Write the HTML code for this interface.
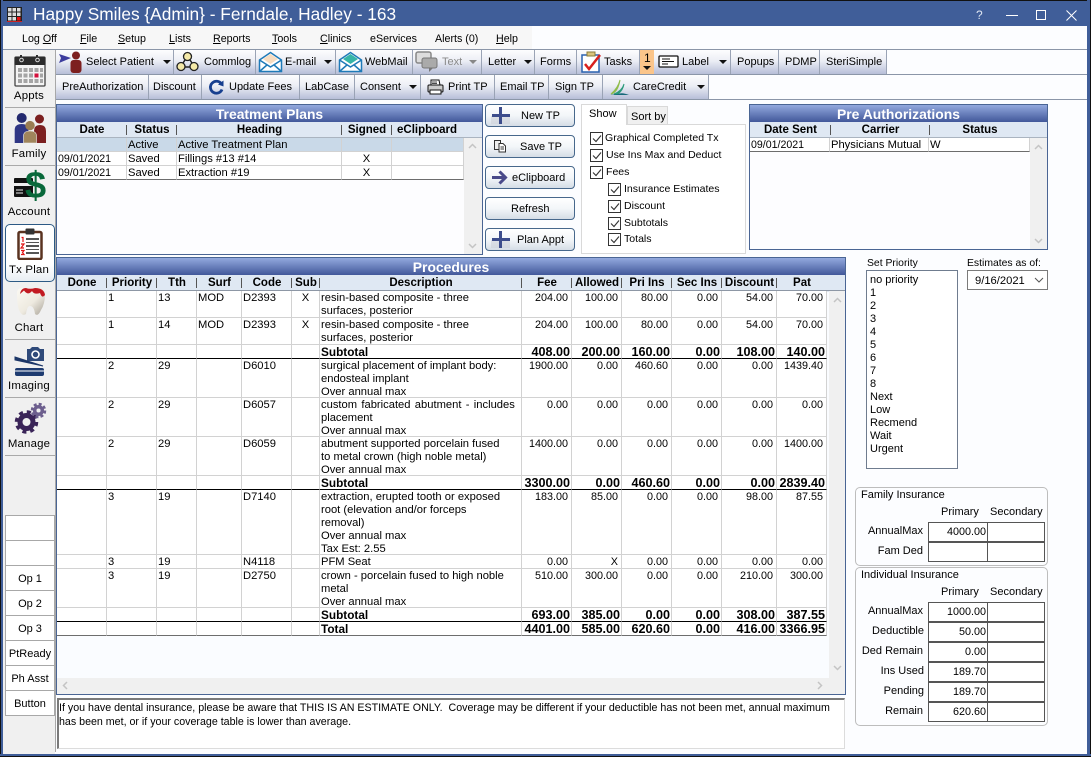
<!DOCTYPE html>
<html><head><meta charset="utf-8"><title>Happy Smiles</title>
<style>
html,body{margin:0;padding:0;width:1091px;height:757px;overflow:hidden;background:#000}
*{box-sizing:border-box}
#w{position:absolute;left:0;top:0;width:1091px;height:757px;background:#fcfdff;font:11px/13px "Liberation Sans",Arial,sans-serif;color:#000;overflow:hidden}
.a{position:absolute}
.t{position:absolute;white-space:nowrap}
.b{font-weight:bold}
.tb{position:absolute;background:linear-gradient(#fdfdfe 0%,#eceef5 45%,#b7bed8 100%);border-right:1px solid #9aa3b5}
.ar{position:absolute;width:0;height:0;border-left:4px solid transparent;border-right:4px solid transparent;border-top:4px solid #111}
.m .t{font-size:10.7px}
.m u{text-decoration:underline}
.nav{position:absolute;left:3px;width:52px;text-align:center;font-size:11.4px;letter-spacing:.2px}
.sep{position:absolute;left:5px;width:50px;height:1px;background:#a9a9a9}
.op{position:absolute;left:5px;width:50px;height:26px;background:#fff;border:1px solid #a8a8a8;text-align:center;line-height:26px}
.tit{position:absolute;height:17px;background:linear-gradient(#93a9de,#42589a);color:#fff;font-weight:bold;font-size:13.9px;line-height:18px;text-align:center;white-space:nowrap}
table{border-collapse:separate;border-spacing:0;table-layout:fixed;position:absolute}
.h td{background:#dfe8f3 linear-gradient(#555,#555) right 3px/1px 10px no-repeat;font-weight:bold;font-size:11.5px;text-align:center;height:15px;line-height:17px;padding:0;white-space:nowrap}
.h td:last-child{background-image:none}
.g td{border-right:1px solid #d2d2d2;border-bottom:1px solid #d2d2d2;vertical-align:top;padding:1px 1px 0;line-height:13px;overflow:hidden;white-space:nowrap;background:#fff;font-size:11.2px}
.g td::after{content:"";display:block;height:0;margin-top:-1px}
.g td.r{text-align:right;padding-right:3px;font-size:10.8px}
.g td.c{text-align:center}
.g tr.s td{font-weight:bold;font-size:11.8px}
.g tr.s td.r{padding-right:1px;font-size:12.6px}
.g tr.k td{border-bottom:1px solid #000}
.g tr.l td{border-bottom:1px solid #6d6d6d}
.o{margin-bottom:-1px;height:100%}
.dt{font-size:10.6px}
.btn{position:absolute;left:485px;width:90px;height:23px;border:1px solid #47688c;border-radius:4px;background:linear-gradient(#fff,#f3f6f9 50%,#d5dde6);line-height:22px}
.chk{position:absolute;width:13px;height:13px;border:1px solid #333;background:#fff}
.ck{font-size:10.55px}
.sb{position:absolute;background:#f0f0f0}
.fld{position:absolute;height:20px;border:1px solid #555;background:#fff;text-align:right;line-height:18px;padding-right:1px;font-size:10.8px}
.ib{position:absolute;left:855px;width:193px;border:1px solid #bdbdbd;border-radius:5px;background:#fcfdff}
.lb{position:absolute;text-align:right;white-space:nowrap}
</style></head><body>
<div id="w">
<!-- window frame -->
<div class="a" style="left:0;top:0;width:1091px;height:26px;background:#405e99;border-top:1px solid #111"></div>
<div class="a" style="left:0;top:0;width:3px;height:757px;background:#405e99;border-left:1px solid #111"></div>
<div class="a" style="left:1087px;top:0;width:4px;height:757px;background:#405e99;border-right:1px solid #111"></div>
<div class="a" style="left:0;top:754px;width:1091px;height:3px;background:#405e99;border-bottom:1px solid #111"></div>
<svg class="a" style="left:7px;top:7px" width="15" height="15"><rect width="15" height="15" fill="#222"/><g fill="#ddd"><rect x="1" y="1" width="3.5" height="3.5"/><rect x="5.5" y="1" width="3.5" height="3.5"/><rect x="10" y="1" width="3.5" height="3.5"/><rect x="1" y="5.5" width="3.5" height="3.5"/><rect x="5.5" y="5.5" width="3.5" height="3.5"/><rect x="10" y="5.5" width="3.5" height="3.5"/><rect x="1" y="10" width="3.5" height="3.5"/><rect x="5.5" y="10" width="3.5" height="3.5"/></g><rect x="10" y="10" width="3.5" height="3.5" fill="#e11"/><path d="M0 14.5H15" stroke="#c22" stroke-width="1"/></svg>
<div class="t" style="left:33px;top:4px;font-size:17.3px;line-height:20px;color:#fff">Happy Smiles {Admin} - Ferndale, Hadley - 163</div>
<div class="t" style="left:976px;top:9px;color:#dfe6f2;font-size:12px">?</div>
<div class="a" style="left:1006px;top:15px;width:12px;height:1px;background:#fff"></div>
<div class="a" style="left:1036px;top:10px;width:10px;height:10px;border:1px solid #fff"></div>
<svg class="a" style="left:1066px;top:10px" width="11" height="11"><path d="M.5.5l10 10M10.500.5l-10 10" stroke="#fff" fill="none"/></svg>
<!-- menu -->
<div class="a" style="left:3px;top:26px;width:529px;height:23px;background:#f7f7f7"></div>
<div class="m">
<div class="t" style="left:22px;top:33px">Log <u>O</u>ff</div>
<div class="t" style="left:80px;top:33px"><u>F</u>ile</div>
<div class="t" style="left:118px;top:33px"><u>S</u>etup</div>
<div class="t" style="left:169px;top:33px"><u>L</u>ists</div>
<div class="t" style="left:213px;top:33px"><u>R</u>eports</div>
<div class="t" style="left:272px;top:33px"><u>T</u>ools</div>
<div class="t" style="left:320px;top:33px"><u>C</u>linics</div>
<div class="t" style="left:370px;top:33px">eServices</div>
<div class="t" style="left:435px;top:33px">Alerts (0)</div>
<div class="t" style="left:496px;top:33px"><u>H</u>elp</div>
</div>
<!-- toolbars -->
<div class="a" style="left:3px;top:49px;width:1084px;height:1px;background:#8b96a8"></div>
<div class="a" style="left:56px;top:74px;width:1031px;height:1px;background:#8b96a8"></div>
<div class="a" style="left:56px;top:99px;width:1031px;height:1px;background:#8b96a8"></div>
<!-- row 1 -->
<div class="tb" style="left:56px;top:50px;width:118px;height:24px"></div>
<div class="tb" style="left:174px;top:50px;width:82px;height:24px"></div>
<div class="tb" style="left:256px;top:50px;width:80px;height:24px"></div>
<div class="tb" style="left:336px;top:50px;width:77px;height:24px"></div>
<div class="tb" style="left:413px;top:50px;width:69px;height:24px"></div>
<div class="tb" style="left:482px;top:50px;width:53px;height:24px"></div>
<div class="tb" style="left:535px;top:50px;width:42px;height:24px"></div>
<div class="tb" style="left:577px;top:50px;width:63px;height:24px"></div>
<div class="a" style="left:640px;top:50px;width:14px;height:24px;background:#fbc58a"></div>
<div class="tb" style="left:654px;top:50px;width:77px;height:24px"></div>
<div class="tb" style="left:731px;top:50px;width:48px;height:24px"></div>
<div class="tb" style="left:779px;top:50px;width:41px;height:24px"></div>
<div class="tb" style="left:820px;top:50px;width:67px;height:24px"></div>
<div class="t" style="left:86px;top:56px">Select Patient</div><div class="ar" style="left:163px;top:60px"></div>
<div class="t" style="left:204px;top:56px">Commlog</div>
<div class="t" style="left:285px;top:56px">E-mail</div><div class="ar" style="left:324px;top:60px"></div>
<div class="t" style="left:365px;top:56px">WebMail</div>
<div class="t" style="left:442px;top:56px;color:#8a8a8a">Text</div><div class="ar" style="left:469px;top:60px;border-top-color:#888"></div>
<div class="t" style="left:488px;top:56px">Letter</div><div class="ar" style="left:524px;top:60px"></div>
<div class="t" style="left:540px;top:56px">Forms</div>
<div class="t" style="left:604px;top:56px">Tasks</div>
<div class="t" style="left:644px;top:52px;font-size:12px">1</div><div class="ar" style="left:643px;top:66px"></div>
<div class="t" style="left:682px;top:56px">Label</div><div class="ar" style="left:719px;top:60px"></div>
<div class="t" style="left:737px;top:56px">Popups</div>
<div class="t" style="left:785px;top:56px">PDMP</div>
<div class="t" style="left:826px;top:56px">SteriSimple</div>
<!-- row 2 -->
<div class="tb" style="left:56px;top:75px;width:93px;height:24px"></div>
<div class="tb" style="left:149px;top:75px;width:53px;height:24px"></div>
<div class="tb" style="left:202px;top:75px;width:98px;height:24px"></div>
<div class="tb" style="left:300px;top:75px;width:55px;height:24px"></div>
<div class="tb" style="left:355px;top:75px;width:66px;height:24px"></div>
<div class="tb" style="left:421px;top:75px;width:74px;height:24px"></div>
<div class="tb" style="left:495px;top:75px;width:54px;height:24px"></div>
<div class="tb" style="left:549px;top:75px;width:54px;height:24px"></div>
<div class="tb" style="left:603px;top:75px;width:106px;height:24px;border-right:1px solid #9aa3b5"></div>
<div class="t" style="left:62px;top:81px">PreAuthorization</div>
<div class="t" style="left:153px;top:81px">Discount</div>
<div class="t" style="left:229px;top:81px">Update Fees</div>
<div class="t" style="left:305px;top:81px">LabCase</div>
<div class="t" style="left:360px;top:81px">Consent</div><div class="ar" style="left:409px;top:85px"></div>
<div class="t" style="left:448px;top:81px">Print TP</div>
<div class="t" style="left:500px;top:81px">Email TP</div>
<div class="t" style="left:555px;top:81px">Sign TP</div>
<div class="t" style="left:633px;top:81px">CareCredit</div><div class="ar" style="left:697px;top:85px"></div>
<!-- toolbar icons -->
<svg class="a" style="left:58px;top:51px" width="26" height="22"><path d="M1 3l12 4-12 5 2-5z" fill="#3d3d9e"/><circle cx="18" cy="4.500" r="4" fill="#7d1f1f"/><rect x="12.500" y="9" width="11" height="13" rx="3" fill="#7d1f1f"/></svg>
<svg class="a" style="left:176px;top:51px" width="23" height="21"><path d="M11.500 5L4.500 16H18.500z" fill="none" stroke="#222" stroke-width="1.500"/><circle cx="11.500" cy="5.500" r="4" fill="#f4e9a8" stroke="#222" stroke-width="1.300"/><circle cx="5" cy="15.500" r="4" fill="#f4e9a8" stroke="#222" stroke-width="1.300"/><circle cx="18" cy="15.500" r="4" fill="#f4e9a8" stroke="#222" stroke-width="1.300"/></svg>
<svg class="a" style="left:258px;top:51px" width="25" height="22"><path d="M1.500 9L12.500 1.500 23.500 9V20.500H1.500z" fill="#fff" stroke="#1f7ab8" stroke-width="1.500"/><path d="M5 8l7.500-5 7.500 5-7.500 5z" fill="#f7dcc0"/><path d="M1.500 9l11 7 11-7M1.500 20.500l8-7M23.500 20.500l-8-7" fill="none" stroke="#1f7ab8" stroke-width="1.500"/></svg>
<svg class="a" style="left:338px;top:51px" width="25" height="22"><path d="M1.500 9L12.500 1.500 23.500 9V20.500H1.500z" fill="#fff" stroke="#1f7ab8" stroke-width="1.500"/><path d="M5 8l7.500-5 7.500 5-7.500 5z" fill="#36b5a8"/><path d="M1.500 9l11 7 11-7M1.500 20.500l8-7M23.500 20.500l-8-7" fill="none" stroke="#1f7ab8" stroke-width="1.500"/></svg>
<svg class="a" style="left:415px;top:51px" width="24" height="22"><rect x="1" y="1" width="15" height="11" rx="2" fill="#ddd" stroke="#888" stroke-width="1.500"/><rect x="7" y="7" width="15" height="10" rx="2" fill="#aaa" stroke="#777"/><path d="M14 17v4l4-4z" fill="#777"/></svg>
<svg class="a" style="left:581px;top:51px" width="22" height="22"><rect x="1" y="4" width="17" height="17" fill="#fff" stroke="#2b62b0" stroke-width="1.500"/><rect x="6" y="1" width="8" height="4" fill="#d9c47c" stroke="#8a7a3a"/><path d="M4 13l4 5L19 4" fill="none" stroke="#d8201e" stroke-width="2.500"/></svg>
<svg class="a" style="left:658px;top:55px" width="21" height="13"><rect x="1" y="1" width="19" height="11" rx="1" fill="#fff" stroke="#111" stroke-width="1.300"/><path d="M4 4h8M4 6.500h12M4 9h6" stroke="#111"/></svg>
<svg class="a" style="left:208px;top:79px" width="17" height="17"><path d="M13.500 5A6 6 0 1 0 14 10.500" fill="none" stroke="#173f8f" stroke-width="2.800"/><path d="M10 5.500L15.500 1.500 15.500 7.500z" fill="#173f8f"/></svg>
<svg class="a" style="left:427px;top:79px" width="17" height="16"><path d="M4 1h8l1 5H4z" fill="#fff" stroke="#111"/><rect x="1" y="6" width="15" height="7" rx="1" fill="#ccc" stroke="#111"/><rect x="3" y="11" width="11" height="4" fill="#fff" stroke="#111"/><path d="M5 3h5M5 4.500h5" stroke="#111" stroke-width=".7"/></svg>
<svg class="a" style="left:609px;top:79px" width="21" height="17"><path d="M2 15Q9 13 11 1 9 9 2 15z" fill="#8fbc4a" stroke="#8fbc4a"/><path d="M5 15Q13 12 15 5 14 11 9 15z" fill="#2a9a7a" stroke="#2a9a7a"/><path d="M1 16H20Q13 13 9 15z" fill="#17697a"/></svg>
<!-- left nav -->
<div class="a" style="left:3px;top:50px;width:52px;height:704px;background:#f0f0f0"></div>
<div class="a" style="left:55px;top:50px;width:1px;height:702px;background:#a8a8a8"></div>
<div class="sep" style="top:107px"></div><div class="sep" style="top:165px"></div>
<div class="sep" style="top:339px"></div><div class="sep" style="top:397px"></div><div class="sep" style="top:455px"></div>
<svg class="a" style="left:14px;top:54px" width="32" height="33"><rect x="1" y="3" width="30" height="29" rx="1" fill="#f4f4f4" stroke="#444" stroke-width="1.300"/><rect x="0.500" y="3" width="31" height="8" rx="1" fill="#2b2b2b"/><path d="M7 1v6M23 1v6" stroke="#2b2b2b" stroke-width="2"/><circle cx="7.500" cy="6" r="1.800" fill="none" stroke="#ddd"/><circle cx="23.500" cy="6" r="1.800" fill="none" stroke="#ddd"/><g fill="#a5a5a5"><rect x="4" y="14" width="4" height="4"/><rect x="9.500" y="14" width="4" height="4"/><rect x="15" y="14" width="4" height="4"/><rect x="20.500" y="14" width="4" height="4"/><rect x="26" y="14" width="3" height="4"/><rect x="4" y="19.500" width="4" height="4"/><rect x="9.500" y="19.500" width="4" height="4"/><rect x="15" y="19.500" width="4" height="4"/><rect x="26" y="19.500" width="3" height="4"/><rect x="4" y="25" width="4" height="4"/><rect x="9.500" y="25" width="4" height="4"/><rect x="15" y="25" width="4" height="4"/><rect x="20.500" y="25" width="4" height="4"/><rect x="26" y="25" width="3" height="4"/></g><rect x="20.500" y="19.500" width="4" height="4" fill="#d4103c"/></svg>
<div class="nav" style="top:90px">Appts</div>
<svg class="a" style="left:14px;top:112px" width="33" height="33"><circle cx="7.700" cy="6" r="5" fill="#23296e"/><path d="M.7 31V18Q.7 12 7.700 12 14.500 12 14.500 18V31z" fill="#2f3684"/><circle cx="25.500" cy="7" r="4.500" fill="#7c2020"/><path d="M20 31V19Q20 13 26 13 32 13 32 19V31z" fill="#7c2020"/><circle cx="16" cy="13.600" r="4.700" fill="#9a7d52"/><path d="M9.500 31V24Q9.500 19 16 19 22.500 19 22.500 24V31z" fill="#a0855c" stroke="#f0f0f0" stroke-width=".6"/></svg>
<div class="nav" style="top:148px">Family</div>
<svg class="a" style="left:13px;top:170px" width="34" height="33"><rect x="1" y="8" width="19" height="19" rx="1" fill="#111"/><rect x="1" y="13" width="19" height="3" fill="#eee"/><path d="M3 20h7M3 23h7" stroke="#eee"/></svg>
<div class="t b" style="left:25px;top:165px;font-size:38px;line-height:42px;color:#08683a">$</div>
<div class="nav" style="top:206px">Account</div>
<!-- Tx plan selected -->
<div class="a" style="left:5px;top:224px;width:50px;height:58px;background:linear-gradient(#fff 70%,#e8eef3);border:1px solid #2d5a85;border-radius:5px"></div>
<svg class="a" style="left:17px;top:228px" width="26" height="32"><rect x="1.500" y="4" width="23" height="27" rx="1.500" fill="#fff" stroke="#5a3320" stroke-width="2.500"/><rect x="8.500" y="0.500" width="9" height="6" rx="1" fill="#333"/><g fill="#555"><rect x="9" y="10" width="13" height="2"/><rect x="9" y="14" width="13" height="1"/><rect x="9" y="17" width="13" height="2"/><rect x="9" y="21" width="13" height="1"/><rect x="9" y="24" width="13" height="2"/></g><path d="M4.500 9.500h1.500v4.500M4 16h3l-3 4h3M4 22.500h3l-1.500 2 1.500 2h-3" stroke="#e01515" stroke-width="1.200" fill="none"/></svg>
<div class="nav" style="top:264px">Tx Plan</div>
<svg class="a" style="left:15px;top:286px" width="31" height="31"><defs><linearGradient id="gt" x1="0" y1="0" x2="1" y2="1"><stop offset="0" stop-color="#fbf9f3"/><stop offset=".55" stop-color="#eeeae0"/><stop offset="1" stop-color="#a9a398"/></linearGradient></defs><path d="M2 9Q1 1 10 2 15 4 20 2 30 1 30 8 30 18 26 24 23 31 20 28 19 20 15 20 12 20 11 28 7 31 4 24 2 18 2 9z" fill="url(#gt)"/><path d="M5 8Q6 2 11 2 15 3.500 20 2 29 2 30 9 27 13 25 7 19 9 17 5 13 10 9 4.500 7 8z" fill="#c21a22"/></svg>
<div class="nav" style="top:322px">Chart</div>
<svg class="a" style="left:14px;top:344px" width="32" height="33"><path d="M13 5h3l2-2h6l2 2h4v12H13z" fill="#2f4a7a"/><circle cx="21.500" cy="10.500" r="3.500" fill="none" stroke="#fff" stroke-width="1.600"/><path d="M1 13L29 22 1 16z" fill="#1d3768" stroke="#1d3768"/><rect x="1" y="24" width="29" height="8" rx="2" fill="#1e3b70"/><rect x="1" y="26.500" width="29" height="1" fill="#fff"/></svg>
<div class="nav" style="top:380px">Imaging</div>
<svg class="a" style="left:14px;top:402px" width="33" height="32"><circle cx="12.500" cy="20" r="6.500" fill="none" stroke="#3a2458" stroke-width="5"/><circle cx="12.500" cy="20" r="10" fill="none" stroke="#3a2458" stroke-width="3.500" stroke-dasharray="4 3.850"/><circle cx="24.500" cy="8.500" r="3.800" fill="none" stroke="#6d5f8e" stroke-width="3.500"/><circle cx="24.500" cy="8.500" r="6.500" fill="none" stroke="#6d5f8e" stroke-width="2.500" stroke-dasharray="3 2.100"/></svg>
<div class="nav" style="top:438px">Manage</div>
<div class="op" style="top:515px"></div><div class="op" style="top:540px"></div>
<div class="op" style="top:565px">Op 1</div><div class="op" style="top:590px">Op 2</div><div class="op" style="top:615px">Op 3</div>
<div class="op" style="top:640px">PtReady</div><div class="op" style="top:665px">Ph Asst</div><div class="op" style="top:690px">Button</div>
<!-- Treatment Plans -->
<div class="a" style="left:56px;top:104px;width:427px;height:151px;border:1px solid #4a6594;background:#fdfdff"></div>
<div class="tit" style="left:57px;top:105px;width:425px">Treatment Plans</div>
<table class="h" style="left:57px;top:122px;width:425px"><colgroup><col style="width:70px"><col style="width:50px"><col style="width:165px"><col style="width:50px"><col style="width:90px"></colgroup><tr><td>Date</td><td>Status</td><td>Heading</td><td>Signed</td><td style="text-align:left;padding-left:5px">eClipboard</td></tr></table>
<div class="a" style="left:57px;top:137px;width:425px;height:1px;background:#aab4c0"></div>
<table class="g" style="left:57px;top:138px;width:407px"><colgroup><col style="width:70px"><col style="width:50px"><col style="width:165px"><col style="width:50px"><col style="width:72px"></colgroup>
<tr style="height:14px"><td style="background:#c9d9e8"></td><td style="background:#c9d9e8">Active</td><td style="background:#c9d9e8">Active Treatment Plan</td><td style="background:#c9d9e8"></td><td style="background:#c9d9e8"></td></tr>
<tr style="height:14px"><td><span class="dt">09/01/2021</span></td><td>Saved</td><td>Fillings #13 #14</td><td class="c">X</td><td></td></tr>
<tr class="l" style="height:14px"><td><span class="dt">09/01/2021</span></td><td>Saved</td><td>Extraction #19</td><td class="c">X</td><td></td></tr></table>
<div class="sb" style="left:464px;top:138px;width:18px;height:116px"></div>
<svg class="a" style="left:468px;top:143px" width="9" height="6"><path d="M1 5l3.500-3.500L8 5" fill="none" stroke="#c4c4c4" stroke-width="1.500"/></svg>
<svg class="a" style="left:468px;top:243px" width="9" height="6"><path d="M1 1l3.500 3.500L8 1" fill="none" stroke="#c4c4c4" stroke-width="1.500"/></svg>
<!-- buttons -->
<div class="btn" style="top:104px"><span class="t" style="left:35px;top:0;line-height:22px">New TP</span></div>
<div class="btn" style="top:135px"><span class="t" style="left:34px;top:0;line-height:22px">Save TP</span></div>
<div class="btn" style="top:166px"><span class="t" style="left:26px;top:0;line-height:22px">eClipboard</span></div>
<div class="btn" style="top:197px"><span class="t" style="left:25px;top:0;line-height:22px">Refresh</span></div>
<div class="btn" style="top:228px"><span class="t" style="left:31px;top:0;line-height:22px">Plan Appt</span></div>
<svg class="a" style="left:491px;top:107px" width="20" height="18"><rect x="0" y="9" width="19" height="8" fill="#c9ced6" opacity=".5"/><path d="M9.500 0V17M1 8.500H19" stroke="#3d4d8c" stroke-width="3"/></svg>
<svg class="a" style="left:491px;top:231px" width="20" height="18"><rect x="0" y="9" width="19" height="8" fill="#c9ced6" opacity=".5"/><path d="M9.500 0V17M1 8.500H19" stroke="#3d4d8c" stroke-width="3"/></svg>
<svg class="a" style="left:493px;top:139px" width="15" height="14"><path d="M1.500 1.500h6v9h-6z" fill="#eee" stroke="#333"/><path d="M6 4.500h4l2.500 2.500v6H6z" fill="#fff" stroke="#333"/><path d="M7.500 8h3.500M7.500 10h3.500" stroke="#333"/></svg>
<svg class="a" style="left:491px;top:170px" width="17" height="15"><path d="M1 7.500H14M8.500 1.500l6 6-6 6" fill="none" stroke="#4a4a8a" stroke-width="3"/></svg>
<!-- Tabs -->
<div class="a" style="left:627px;top:106px;width:41px;height:19px;background:#f0f0f0;border:1px solid #d9d9d9"></div>
<div class="t" style="left:631px;top:110px;margin-top:1px">Sort by</div>
<div class="a" style="left:581px;top:124px;width:165px;height:130px;background:#fff;border:1px solid #d9d9d9"></div>
<div class="a" style="left:581px;top:104px;width:46px;height:21px;background:#fff;border:1px solid #d9d9d9;border-bottom:none"></div>
<div class="t" style="left:589px;top:108px">Show</div>
<div class="chk" style="left:590px;top:132px"></div><div class="chk" style="left:590px;top:149px"></div><div class="chk" style="left:590px;top:166px"></div>
<div class="chk" style="left:608px;top:183px"></div><div class="chk" style="left:608px;top:200px"></div><div class="chk" style="left:608px;top:217px"></div><div class="chk" style="left:608px;top:233px"></div>
<svg class="a" style="left:590px;top:132px" width="31" height="115" fill="none" stroke="#333" stroke-width="1.100"><path d="M3 6.500l3 3 5-6M3 23.500l3 3 5-6M3 40.500l3 3 5-6M21 57.500l3 3 5-6M21 74.500l3 3 5-6M21 91.500l3 3 5-6M21 107.500l3 3 5-6"/></svg>
<div class="t ck" style="left:605px;top:132px">Graphical Completed Tx</div>
<div class="t ck" style="left:606px;top:149px">Use Ins Max and Deduct</div>
<div class="t ck" style="left:606px;top:166px">Fees</div>
<div class="t ck" style="left:624px;top:183px">Insurance Estimates</div>
<div class="t ck" style="left:624px;top:200px">Discount</div>
<div class="t ck" style="left:624px;top:217px">Subtotals</div>
<div class="t ck" style="left:624px;top:233px">Totals</div>
<!-- Pre Auth -->
<div class="a" style="left:749px;top:104px;width:299px;height:146px;border:1px solid #4a6594;background:#fdfdff"></div>
<div class="tit" style="left:750px;top:105px;width:297px">Pre Authorizations</div>
<table class="h" style="left:750px;top:122px;width:297px"><colgroup><col style="width:81px"><col style="width:99px"><col style="width:117px"></colgroup><tr><td>Date Sent</td><td>Carrier</td><td style="padding-right:17px">Status</td></tr></table>
<div class="a" style="left:750px;top:137px;width:297px;height:1px;background:#aab4c0"></div>
<table class="g" style="left:750px;top:138px;width:280px"><colgroup><col style="width:80px"><col style="width:99px"><col style="width:101px"></colgroup>
<tr class="l" style="height:14px"><td><span class="dt">09/01/2021</span></td><td>Physicians Mutual</td><td>W</td></tr></table>
<div class="sb" style="left:1030px;top:138px;width:17px;height:111px"></div>
<svg class="a" style="left:1034px;top:144px" width="9" height="6"><path d="M1 5l3.500-3.500L8 5" fill="none" stroke="#c4c4c4" stroke-width="1.500"/></svg>
<svg class="a" style="left:1034px;top:238px" width="9" height="6"><path d="M1 1l3.500 3.500L8 1" fill="none" stroke="#c4c4c4" stroke-width="1.500"/></svg>
<!-- Procedures -->
<div class="a" style="left:56px;top:257px;width:790px;height:438px;border:1px solid #4a6594;background:#fafcff"></div>
<div class="tit" style="left:57px;top:258px;width:788px">Procedures</div>
<table class="h" style="left:57px;top:275px;width:788px"><colgroup><col style="width:50px"><col style="width:50px"><col style="width:40px"><col style="width:45px"><col style="width:50px"><col style="width:28px"><col style="width:202px"><col style="width:50px"><col style="width:50px"><col style="width:50px"><col style="width:50px"><col style="width:55px"><col style="width:68px"></colgroup><tr><td>Done</td><td>Priority</td><td>Tth</td><td>Surf</td><td>Code</td><td>Sub</td><td>Description</td><td>Fee</td><td>Allowed</td><td>Pri Ins</td><td>Sec Ins</td><td>Discount</td><td style="padding-right:18px">Pat</td></tr></table>
<div class="a" style="left:57px;top:290px;width:788px;height:1px;background:#8d97a5"></div>
<table class="g" style="left:57px;top:291px;width:770px"><colgroup><col style="width:50px"><col style="width:50px"><col style="width:40px"><col style="width:45px"><col style="width:50px"><col style="width:28px"><col style="width:202px"><col style="width:50px"><col style="width:50px"><col style="width:50px"><col style="width:50px"><col style="width:55px"><col style="width:50px"></colgroup>
<tr style="height:27px"><td></td><td>1</td><td>13</td><td>MOD</td><td>D2393</td><td class="c">X</td><td>resin-based composite - three<br>surfaces, posterior</td><td class="r">204.00</td><td class="r">100.00</td><td class="r">80.00</td><td class="r">0.00</td><td class="r">54.00</td><td class="r">70.00</td></tr>
<tr style="height:27px"><td></td><td>1</td><td>14</td><td>MOD</td><td>D2393</td><td class="c">X</td><td>resin-based composite - three<br>surfaces, posterior</td><td class="r">204.00</td><td class="r">100.00</td><td class="r">80.00</td><td class="r">0.00</td><td class="r">54.00</td><td class="r">70.00</td></tr>
<tr class="s k" style="height:14px"><td></td><td></td><td></td><td></td><td></td><td></td><td>Subtotal</td><td class="r">408.00</td><td class="r">200.00</td><td class="r">160.00</td><td class="r">0.00</td><td class="r">108.00</td><td class="r">140.00</td></tr>
<tr style="height:39px"><td></td><td>2</td><td>29</td><td></td><td>D6010</td><td></td><td><div class="o" style="height:37px">surgical placement of implant body:<br>endosteal implant<br>Over annual max</div></td><td class="r">1900.00</td><td class="r">0.00</td><td class="r">460.60</td><td class="r">0.00</td><td class="r">0.00</td><td class="r">1439.40</td></tr>
<tr style="height:39px"><td></td><td>2</td><td>29</td><td></td><td>D6057</td><td></td><td><div class="o" style="height:37px"><span style="word-spacing:1.200px">custom fabricated abutment - includes</span><br>placement<br>Over annual max</div></td><td class="r">0.00</td><td class="r">0.00</td><td class="r">0.00</td><td class="r">0.00</td><td class="r">0.00</td><td class="r">0.00</td></tr>
<tr style="height:39px"><td></td><td>2</td><td>29</td><td></td><td>D6059</td><td></td><td><div class="o" style="height:37px">abutment supported porcelain fused<br>to metal crown (high noble metal)<br>Over annual max</div></td><td class="r">1400.00</td><td class="r">0.00</td><td class="r">0.00</td><td class="r">0.00</td><td class="r">0.00</td><td class="r">1400.00</td></tr>
<tr class="s k" style="height:14px"><td></td><td></td><td></td><td></td><td></td><td></td><td>Subtotal</td><td class="r">3300.00</td><td class="r">0.00</td><td class="r">460.60</td><td class="r">0.00</td><td class="r">0.00</td><td class="r">2839.40</td></tr>
<tr style="height:65px"><td></td><td>3</td><td>19</td><td></td><td>D7140</td><td></td><td><div class="o" style="height:63px">extraction, erupted tooth or exposed<br>root (elevation and/or forceps<br>removal)<br>Over annual max<br>Tax Est: 2.55</div></td><td class="r">183.00</td><td class="r">85.00</td><td class="r">0.00</td><td class="r">0.00</td><td class="r">98.00</td><td class="r">87.55</td></tr>
<tr style="height:14px"><td></td><td>3</td><td>19</td><td></td><td>N4118</td><td></td><td>PFM Seat</td><td class="r">0.00</td><td class="r">X</td><td class="r">0.00</td><td class="r">0.00</td><td class="r">0.00</td><td class="r">0.00</td></tr>
<tr style="height:39px"><td></td><td>3</td><td>19</td><td></td><td>D2750</td><td></td><td><div class="o" style="height:37px">crown - porcelain fused to high noble<br>metal<br>Over annual max</div></td><td class="r">510.00</td><td class="r">300.00</td><td class="r">0.00</td><td class="r">0.00</td><td class="r">210.00</td><td class="r">300.00</td></tr>
<tr class="s k" style="height:14px"><td></td><td></td><td></td><td></td><td></td><td></td><td>Subtotal</td><td class="r">693.00</td><td class="r">385.00</td><td class="r">0.00</td><td class="r">0.00</td><td class="r">308.00</td><td class="r">387.55</td></tr>
<tr class="s l" style="height:14px"><td></td><td></td><td></td><td></td><td></td><td></td><td>Total</td><td class="r">4401.00</td><td class="r">585.00</td><td class="r">620.60</td><td class="r">0.00</td><td class="r">416.00</td><td class="r">3366.95</td></tr>
</table>
<div class="sb" style="left:829px;top:291px;width:16px;height:387px"></div>
<div class="sb" style="left:57px;top:678px;width:788px;height:16px"></div>
<svg class="a" style="left:833px;top:297px" width="9" height="6"><path d="M1 5l3.500-3.500L8 5" fill="none" stroke="#c4c4c4" stroke-width="1.500"/></svg>
<svg class="a" style="left:833px;top:665px" width="9" height="6"><path d="M1 1l3.500 3.500L8 1" fill="none" stroke="#c4c4c4" stroke-width="1.500"/></svg>
<svg class="a" style="left:62px;top:681px" width="6" height="9"><path d="M5 1L1.500 4.500 5 8" fill="none" stroke="#c4c4c4" stroke-width="1.500"/></svg>
<svg class="a" style="left:817px;top:681px" width="6" height="9"><path d="M1 1l3.500 3.500L1 8" fill="none" stroke="#c4c4c4" stroke-width="1.500"/></svg>
<!-- note -->
<div class="a" style="left:57px;top:698px;width:788px;height:51px;background:#fff;border:1px solid #dcdcdc;border-top:2px solid #7a7a7a;border-left:2px solid #7a7a7a"></div>
<div class="t" style="left:59px;top:701px;font-size:10.67px;line-height:14px">If you have dental insurance, please be aware that THIS IS AN ESTIMATE ONLY.&nbsp; Coverage may be different if your deductible has not been met, annual maximum<br>has been met, or if your coverage table is lower than average.</div>
<!-- priority -->
<div class="t" style="left:867px;top:257px;font-size:10.4px">Set Priority</div>
<div class="a" style="left:866px;top:270px;width:92px;height:199px;background:#fff;border:1px solid #6f7c8f;padding:3px 3px;line-height:13px">no priority<br>1<br>2<br>3<br>4<br>5<br>6<br>7<br>8<br>Next<br>Low<br>Recmend<br>Wait<br>Urgent</div>
<div class="t" style="left:967px;top:257px;font-size:10.4px">Estimates as of:</div>
<div class="a" style="left:967px;top:270px;width:81px;height:20px;background:#fff;border:1px solid #7a7a7a;line-height:20px;padding-left:7px;font-size:11.2px">9/16/2021</div>
<svg class="a" style="left:1034px;top:277px" width="10" height="6"><path d="M1 1l4 4 4-4" fill="none" stroke="#555"/></svg>
<!-- insurance -->
<div class="ib" style="top:487px;height:79px"></div>
<div class="ib" style="top:567px;height:159px"></div>
<div class="t" style="left:861px;top:489px">Family Insurance</div>
<div class="t" style="left:941px;top:506px">Primary</div><div class="t" style="left:990px;top:506px">Secondary</div>
<div class="lb" style="right:168px;top:525px">AnnualMax</div>
<div class="lb" style="right:168px;top:545px">Fam Ded</div>
<div class="fld" style="left:928px;top:522px;width:60px">4000.00</div><div class="fld" style="left:987px;top:522px;width:58px"></div>
<div class="fld" style="left:928px;top:542px;width:60px"></div><div class="fld" style="left:987px;top:542px;width:58px"></div>
<div class="t" style="left:861px;top:569px">Individual Insurance</div>
<div class="t" style="left:941px;top:586px">Primary</div><div class="t" style="left:990px;top:586px">Secondary</div>
<div class="lb" style="right:168px;top:605px">AnnualMax</div>
<div class="lb" style="right:167px;top:625px">Deductible</div>
<div class="lb" style="right:168px;top:645px">Ded Remain</div>
<div class="lb" style="right:167px;top:665px">Ins Used</div>
<div class="lb" style="right:167px;top:685px">Pending</div>
<div class="lb" style="right:168px;top:705px">Remain</div>
<div class="fld" style="left:928px;top:602px;width:60px">1000.00</div><div class="fld" style="left:987px;top:602px;width:58px"></div>
<div class="fld" style="left:928px;top:622px;width:60px">50.00</div><div class="fld" style="left:987px;top:622px;width:58px"></div>
<div class="fld" style="left:928px;top:642px;width:60px">0.00</div><div class="fld" style="left:987px;top:642px;width:58px"></div>
<div class="fld" style="left:928px;top:662px;width:60px">189.70</div><div class="fld" style="left:987px;top:662px;width:58px"></div>
<div class="fld" style="left:928px;top:682px;width:60px">189.70</div><div class="fld" style="left:987px;top:682px;width:58px"></div>
<div class="fld" style="left:928px;top:702px;width:60px">620.60</div><div class="fld" style="left:987px;top:702px;width:58px"></div>
</div>
</body></html>
